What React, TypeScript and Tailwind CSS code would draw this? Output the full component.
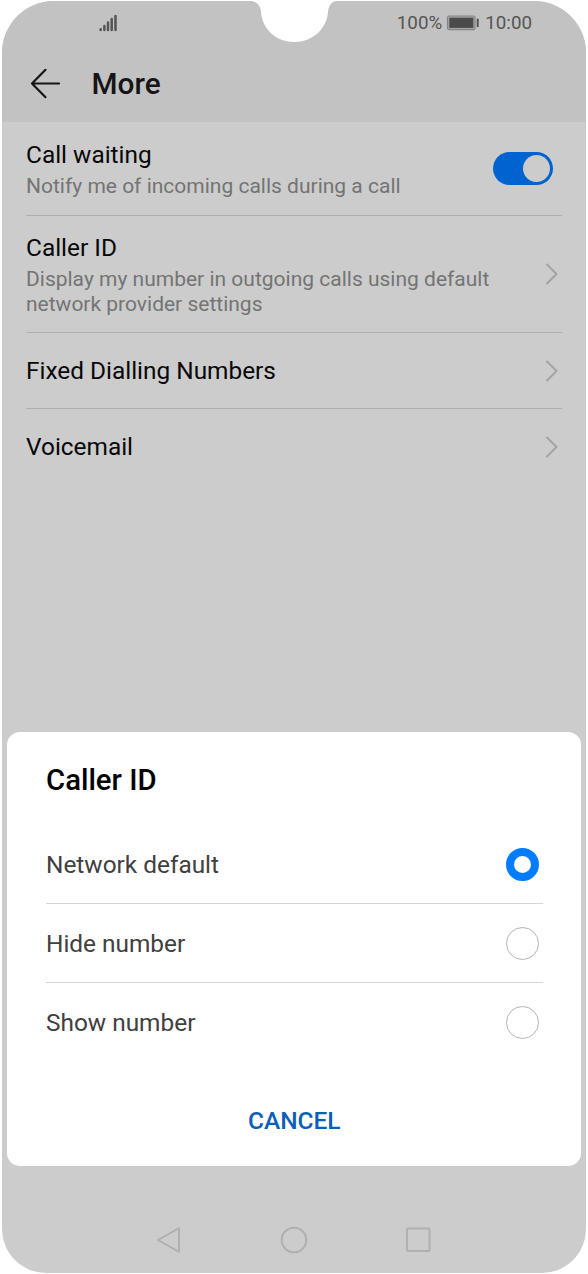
import { useState } from "react";

const settings = [
  { title: "Call waiting", detail: ["Notify me of incoming calls during a call"], toggle: true, height: "h-[94px]" },
  {
    title: "Caller ID",
    detail: ["Display my number in outgoing calls using default", "network provider settings"],
    toggle: false,
    height: "h-[117px]",
  },
  { title: "Fixed Dialling Numbers", detail: [], toggle: false, height: "h-[76px]" },
  { title: "Voicemail", detail: [], toggle: false, height: "h-[76px]" },
];

const callerIdOptions = ["Network default", "Hide number", "Show number"];

const StatusBar = () => (
  <div className="relative flex h-[43px] items-center justify-between pr-[54px] pl-[96px] text-[#555555]">
    {/* Signal strength */}
    <svg width="20" height="18" viewBox="0 0 20 18" stroke="currentColor" strokeWidth="2.5" strokeLinecap="round">
      <path d="M2.700 16v-.8M6.400 16v-4M10 16v-7.500M13.700 16v-11M17.500 16v-14" />
    </svg>

    {/* Notch */}
    <svg className="absolute top-[-1px] left-[247px]" width="90" height="44" viewBox="0 0 90 44" fill="#ffffff">
      <path d="M0 0V1H3C8 2 11.500 6 11.800 11C13 29 27 42 45.500 42C63 42 78 29 79 12C79.500 6 82 2 87 1H90V0Z" />
    </svg>

    <div className="flex items-center text-[18.8px] leading-6">
      <span>100%</span>
      <svg className="mr-[5px] ml-[4px]" width="34" height="16" viewBox="0 0 34 16" fill="none">
        <rect x="1.500" y="1" width="27.500" height="13.600" rx="1.500" fill="#a6a6a6" stroke="#858585" strokeWidth="1.200" />
        <rect x="3.300" y="2.700" width="24" height="10.200" fill="#4b4b4b" />
        <rect x="30.700" y="3.500" width="2" height="8.800" rx="1" fill="#555555" />
      </svg>
      <span>10:00</span>
    </div>
  </div>
);

const Chevron = () => (
  <svg width="14" height="24" viewBox="0 0 14 24" fill="none" stroke="#a3a3a3" strokeWidth="2" strokeLinecap="round" strokeLinejoin="round">
    <path d="M2 2.500L11.500 12L2 21.500" />
  </svg>
);

const App = () => {
  const [waiting, setWaiting] = useState(true);
  const [selected, setSelected] = useState("Network default");

  return (
    <div className="h-[1274px] w-[588px] bg-white px-[2px] pt-px font-['Roboto',sans-serif]">
      <div className="flex h-[1272px] flex-col overflow-hidden rounded-t-[52px] rounded-b-[44px] bg-[#cccccc]">
        {/* Header */}
        <header className="h-[121px] shrink-0 bg-[#c2c2c2]">
          <StatusBar />
          <div className="flex h-[78px] items-center pt-[2px] pl-[27px]">
            <svg width="32" height="32" viewBox="0 0 32 32" fill="none" stroke="#151515" strokeWidth="2.200" strokeLinecap="round" strokeLinejoin="round">
              <path d="M30 15.500H3M16.500 1.800L3 15.500L16.500 29.200" />
            </svg>
            <h1 className="ml-[30.500px] text-[29.8px] leading-9 font-medium text-[#151515]">More</h1>
          </div>
        </header>

        {/* Settings list */}
        <main className="flex-1 px-6">
          {settings.map((item, i) => (
            <div
              key={item.title}
              className={`flex items-center justify-between ${item.height} ${i < settings.length - 1 ? "border-b border-[#afafaf]" : ""}`}
            >
              <div>
                <h2 className="text-[24.4px] leading-[34px] text-[#080808]">{item.title}</h2>
                {item.detail.length > 0 && (
                  <div className="mt-[2px] text-[21px] leading-[25px] whitespace-nowrap text-[#747474]">
                    {item.detail.map((line) => (
                      <p key={line}>{line}</p>
                    ))}
                  </div>
                )}
              </div>
              {item.toggle ? (
                <button
                  onClick={() => setWaiting(!waiting)}
                  className={`mr-[9.500px] flex h-[33px] w-[60px] items-center rounded-full px-[3px] ${waiting ? "justify-end bg-[#0064d0]" : "justify-start bg-[#a3a3a3]"}`}
                >
                  <span className="size-[27px] rounded-full bg-[#cccccc]" />
                </button>
              ) : (
                <span className="mr-[3px]"><Chevron /></span>
              )}
            </div>
          ))}
        </main>

        {/* Caller ID sheet */}
        <section className="mr-[5px] ml-[4.500px] h-[434px] shrink-0 rounded-[13px] bg-white pr-[38.500px] pl-[39.500px]">
          <h2 className="flex h-[93px] items-center pt-[4px] text-[29.3px] font-medium text-black">Caller ID</h2>
          {callerIdOptions.map((option, i) => (
            <button
              key={option}
              onClick={() => setSelected(option)}
              className={`flex h-[79px] w-full items-center justify-between pr-[3.500px] ${i < callerIdOptions.length - 1 ? "border-b border-[#d6d6d6]" : ""}`}
            >
              <span className="pt-[2px] text-[24.4px] text-[#404040]">{option}</span>
              <span
                className={`size-[33px] rounded-full ${selected === option ? "border-[8px] border-[#007dff]" : "border-[1.500px] border-[#b3b3b3]"}`}
              />
            </button>
          ))}
          <button className="mt-[37px] flex h-[44px] w-full items-center justify-center text-[24.5px] font-medium text-[#0a5fb8]">CANCEL</button>
        </section>

        {/* Navigation bar */}
        <nav className="flex h-[107px] shrink-0 items-center justify-center gap-[97px] pt-[40px]">
          <svg width="28" height="28" viewBox="0 0 28 28" fill="none" stroke="#b0b0b0" strokeWidth="2" strokeLinejoin="round">
            <path d="M24 2.200V25.800L3 14Z" />
          </svg>
          <svg width="28" height="28" viewBox="0 0 28 28" fill="none" stroke="#b0b0b0" strokeWidth="2">
            <circle cx="14" cy="14" r="12.300" />
          </svg>
          <svg width="28" height="28" viewBox="0 0 28 28" fill="none" stroke="#b0b0b0" strokeWidth="2">
            <rect x="2" y="2.500" width="22.500" height="22.500" rx="1" />
          </svg>
        </nav>
      </div>
    </div>
  );
};

export default App;
